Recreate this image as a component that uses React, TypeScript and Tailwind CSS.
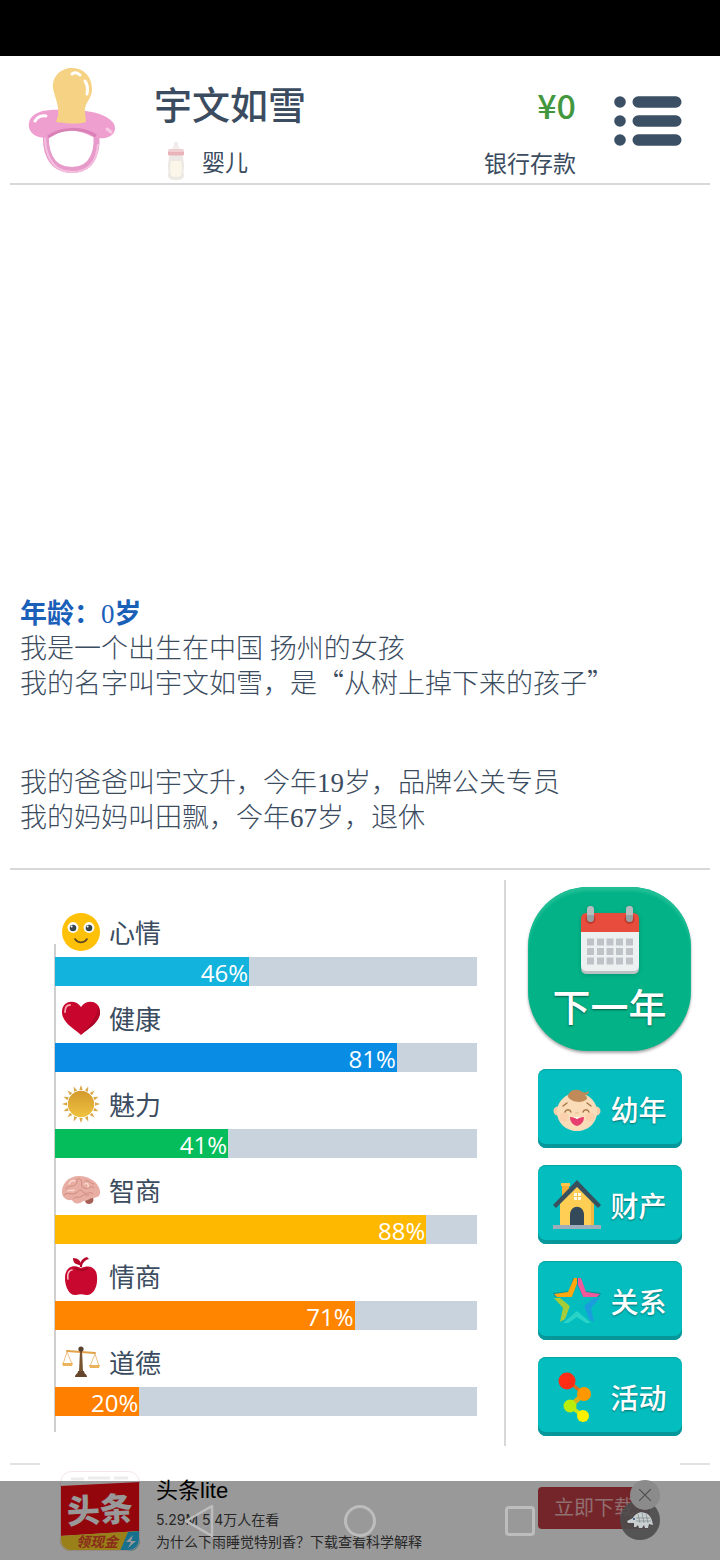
import React from "react";

// --- DATA ---
const STATS = [
  { name: "心情", value: 46, color: "bg-[#12b3dc]", icon: <SmileIcon /> },
  { name: "健康", value: 81, color: "bg-[#088ce4]", icon: <HeartIcon /> },
  { name: "魅力", value: 41, color: "bg-[#05bd5a]", icon: <SunIcon /> },
  { name: "智商", value: 88, color: "bg-[#ffb800]", icon: <BrainIcon /> },
  { name: "情商", value: 71, color: "bg-[#ff8500]", icon: <AppleIcon /> },
  { name: "道德", value: 20, color: "bg-[#ff7f00]", icon: <ScalesIcon /> },
];

const ACTIONS = [
  { name: "幼年", icon: <BabyIcon /> },
  { name: "财产", icon: <HouseIcon /> },
  { name: "关系", icon: <StarIcon /> },
  { name: "活动", icon: <NodesIcon /> },
];

// --- Header drawings ---
function PacifierIcon() {
  return (
    <svg viewBox="0 0 88 106" className="h-[106px] w-[88px] shrink-0" aria-hidden="true">
      <path d="M19 58C15 82 22 102 44 102C65 102 72 82 67 58" fill="none" stroke="#e79bcb" strokeWidth="6" />
      <path d="M17 64C16 86 24 104 44 104C62 104 69 92 70 76" fill="none" stroke="#f5bfdf" strokeWidth="2" />
      <path d="M1 55C3 44 18 41 32 42L58 43C74 45 88 52 87 61C86 70 74 72 65 69C50 61 37 60 25 68C12 73 -1 66 1 55Z" fill="#ee9fd0" />
      <path d="M20 69C32 60 53 58 68 68" fill="none" stroke="#d981b6" strokeWidth="3" />
      <path d="M7 53C9 49 14 47 18 48" fill="none" stroke="#fff" strokeWidth="3" strokeLinecap="round" />
      <path d="M79 61L83 64" stroke="#f8c9e5" strokeWidth="3" strokeLinecap="round" />
      <path d="M25 20C24 8 33 0 44 0C56 0 64 9 64 21C64 32 56 34 57 44L58 54C48 57 38 55 28 54C34 41 27 32 25 20Z" fill="#f6d384" />
      <path d="M44 6C47 4 50 5 52 7M57 13C60 17 60 21 59 26" fill="none" stroke="#fff" strokeWidth="3" strokeLinecap="round" />
    </svg>
  );
}

function BottleIcon() {
  return (
    <svg viewBox="0 0 20 40" className="h-10 w-5 shrink-0" aria-hidden="true">
      <path d="M6 9C6 6 8 6 8 4V1H12V4C12 6 14 6 14 9Z" fill="#f3ecea" />
      <rect x="2" y="8" width="16" height="7" rx="2" fill="#f0cdd1" />
      <path d="M2 11H18V14H2Z" fill="#e9b3ba" />
      <path d="M3 15H17C17 18 18 21 18 25C18 29 17 30 18 34C18 38 15 39 10 39S2 38 2 34C3 30 2 29 2 25C2 21 3 18 3 15Z" fill="#ece9e4" />
      <path d="M5 20H15L16 27L15 35Q10 37 5 35L4 27Z" fill="#fbf6e8" />
    </svg>
  );
}

function MenuIcon() {
  return (
    <svg viewBox="0 0 68 50" className="h-[50px] w-[68px]" fill="#3b5064" aria-hidden="true">
      {[6, 25, 44].map((y) => (
        <g key={y}>
          <circle cx="6" cy={y} r="5.8" />
          <rect x="18.5" y={y - 5.8} width="49" height="11.6" rx="5.8" />
        </g>
      ))}
    </svg>
  );
}

// --- Stat drawings ---
function SmileIcon() {
  return (
    <svg viewBox="0 0 40 40" className="size-10" aria-hidden="true">
      <circle cx="20" cy="20" r="19" fill="#ffc107" />
      <circle cx="12" cy="15.5" r="5.4" fill="#fff" />
      <circle cx="28" cy="15.5" r="5.4" fill="#fff" />
      <circle cx="12" cy="16" r="3.3" fill="#37474f" />
      <circle cx="28" cy="16" r="3.3" fill="#37474f" />
      <circle cx="10.6" cy="14.6" r="1" fill="#fff" />
      <circle cx="26.6" cy="14.6" r="1" fill="#fff" />
      <path d="M14 27C17 31.5 23 31.5 26 27" fill="none" stroke="#5b4524" strokeWidth="1.6" strokeLinecap="round" />
    </svg>
  );
}

function HeartIcon() {
  return (
    <svg viewBox="0 0 40 40" className="size-10" aria-hidden="true">
      <path d="M20 37C14 31 1 25 1 14C1 2 15 1 20 9C25 1 39 2 39 14C39 25 26 31 20 37Z" fill="#c8062d" />
      <path d="M20 37C26 31 39 25 39 14C39 12 38 10 37 8C37 20 27 28 20 37Z" fill="#b00428" />
      <path d="M4 14C4 9 6 7 9 7" fill="none" stroke="#f4a3ae" strokeWidth="1.8" strokeLinecap="round" />
    </svg>
  );
}

function SunIcon() {
  return (
    <svg viewBox="0 0 40 40" className="size-10" aria-hidden="true">
      <defs>
        <linearGradient id="sun" x1="0" y1="0" x2="0" y2="1">
          <stop offset="0" stopColor="#d39a2d" />
          <stop offset="1" stopColor="#f0c23f" />
        </linearGradient>
      </defs>
      {Array.from({ length: 16 }, (_, i) => (
        <path key={i} d="M18.3 6L20 1L21.7 6Z" fill="#d9a848" transform={`rotate(${i * 22.5} 20 20)`} />
      ))}
      <circle cx="20" cy="20" r="13.2" fill="url(#sun)" />
    </svg>
  );
}

function BrainIcon() {
  return (
    <svg viewBox="0 0 40 40" className="size-10" aria-hidden="true">
      <path d="M22 28L31 26C34 30 32 34 28 34C24 34 25 31 22 28Z" fill="#a65f54" />
      <path d="M1 22C1 14 7 6 18 6C29 6 38 13 39 21C40 26 36 28 31 28C27 29 27 31 22 31C20 34 13 35 11 30C5 31 1 27 1 22Z" fill="#e9aea3" />
      <path d="M5 19C8 14 12 18 15 14S12 9 18 9M19 9C23 12 18 16 23 18S31 14 33 18M3 25C8 21 10 26 15 23S18 18 22 22 29 20 32 24M24 11C28 9 29 14 33 14M12 29C14 25 18 29 21 26S27 27 28 25" fill="none" stroke="#cf8b81" strokeWidth="1" strokeLinecap="round" />
      <path d="M8 14C10 10 12 10 14 11M24 14C26 12 28 15 27 17M7 21C10 19 11 22 13 20" fill="none" stroke="#f9d9d1" strokeWidth="1.4" strokeLinecap="round" />
    </svg>
  );
}

function AppleIcon() {
  return (
    <svg viewBox="0 0 40 40" className="size-10" aria-hidden="true">
      <path d="M20 12C10 7 4 13 4 22C4 32 9 40 15 39C18 38 22 38 25 39C32 40 37 31 36 21C36 12 29 8 20 12Z" fill="#c9082f" />
      <path d="M19 11C18 6 22 2 26 1L28 3C24 4 21 7 21 11Z" fill="#b8062a" />
      <path d="M12 2C17 2 20 5 20 9C15 9 12 7 12 2Z" fill="#b8062a" />
      <path d="M7 23C6 18 8 14 11 14" fill="none" stroke="#f6b8c0" strokeWidth="1.6" strokeLinecap="round" />
      <path d="M14 12C17 15 24 15 27 12" fill="none" stroke="#9c0523" strokeWidth="1.5" />
    </svg>
  );
}

function ScalesIcon() {
  return (
    <svg viewBox="0 0 40 40" className="size-10" aria-hidden="true">
      <path d="M6 10L2 22M6 10L11 22M34 12L29 24M34 12L38 24" stroke="#edc184" strokeWidth="1" />
      <path d="M6 9L34 11" stroke="#e2a248" strokeWidth="2" strokeLinecap="round" />
      <path d="M1 21H12L11 24H2ZM28 23H39L38 26H29Z" fill="#eab35c" />
      <path d="M19 8H21L22 30H18Z" fill="#79552f" />
      <circle cx="20" cy="7" r="2.6" fill="#59402b" />
      <path d="M17 29H23C23 32 26 32 26 35H14C14 32 17 32 17 29Z" fill="#65452b" />
    </svg>
  );
}

// --- Button drawings ---
function CalendarIcon() {
  return (
    <svg viewBox="0 0 60 70" className="h-[70px] w-[60px] drop-shadow-sm" aria-hidden="true">
      <path d="M1 24H59V63Q59 69 53 69H7Q1 69 1 63Z" fill="#bcc2c4" />
      <path d="M1 24H59V60Q59 66 53 66H7Q1 66 1 60Z" fill="#ecf0f1" />
      <path d="M1 27V14Q1 8 7 8H53Q59 8 59 14V27Z" fill="#e74c3c" />
      {[10.5, 49.5].map((x) => (
        <g key={x}>
          <circle cx={x} cy="14" r="5" fill="#c0392b" />
          <rect x={x - 3.5} y="1" width="7" height="16" rx="3.5" fill="#98a2a5" />
          <path d={`M${x - 3.5} 10V4.5a3.5 3.5 0 0 1 7 0V10Z`} fill="#b6bdbf" />
        </g>
      ))}
      {[33.5, 43, 52.5].map((y) =>
        [7, 17, 26.5, 36, 46].map((x) => <rect key={`${x}-${y}`} x={x} y={y} width="7" height="7" fill="#bdc3c7" />)
      )}
    </svg>
  );
}

function BabyIcon() {
  return (
    <svg viewBox="0 0 48 48" className="size-12" aria-hidden="true">
      <circle cx="5" cy="26" r="4.5" fill="#f6cfa9" />
      <circle cx="43" cy="26" r="4.5" fill="#f6cfa9" />
      <path d="M24 8C35 8 44 16 44 27C44 38 35 46 24 46S4 38 4 27C4 16 13 8 24 8Z" fill="#fbdcb8" />
      <path d="M15 12C15 6 22 3 28 6C31 8 33 8 36 6C36 9 34 10 32 10C34 11 34 13 34 14C29 19 18 17 15 12Z" fill="#c08b58" />
      <circle cx="11" cy="32" r="4.5" fill="#fad0ad" />
      <circle cx="37" cy="32" r="4.5" fill="#fad0ad" />
      <path d="M12 27C13 24 17 24 18 27M30 27C31 24 35 24 36 27M10 21L14 18M34 18L38 21" fill="none" stroke="#a67648" strokeWidth="1.4" strokeLinecap="round" />
      <path d="M22 28H26" stroke="#efc198" strokeWidth="1.4" />
      <path d="M17 32C20 32 22 33 24 34C26 33 28 32 31 32C31 37 28 40 24 41C20 40 17 37 17 32Z" fill="#e83d6f" />
      <path d="M21 32H27L24 34Z" fill="#fff" />
    </svg>
  );
}

function HouseIcon() {
  return (
    <svg viewBox="0 0 48 48" className="size-12 overflow-visible" aria-hidden="true">
      <path d="M9 3H16V18H9Z" fill="#f4ae35" />
      <path d="M8 2H17V5H8Z" fill="#ffc64a" />
      <path d="M7 21L24 4L41 21V45H7Z" fill="#ffce54" />
      <path d="M38 18L41 21V45H38Z" fill="#f0b840" />
      <path d="M0 24L24 -1L48 24L45 27L24 6L3 27Z" fill="#39515f" />
      <path d="M17 45V34C17 23 31 23 31 34V45Z" fill="#34495a" />
      <rect x="21" y="12" width="7" height="7" rx="1" fill="#fffbe9" />
      <path d="M24.5 12V19M21 15.5H28" stroke="#f3c654" strokeWidth="1" />
      <rect x="0" y="44" width="48" height="4" fill="#9dadba" />
    </svg>
  );
}

function StarIcon() {
  return (
    <svg viewBox="0 0 48 48" className="size-12" aria-hidden="true">
      <g fill="#0a8f92">
        <path d="M0 16L16 14L20 1H28L32 14L48 16L46 20H2Z" />
      </g>
      <path d="M1 17L15 15L21 1H24V7L19 20H4Z" fill="#ffa70f" />
      <path d="M25 1H28L33 15L47 17L44 20H30L25 8Z" fill="#f05a9c" />
      <path d="M1 21H7L17 29L12 42L7 45L10 31Z" fill="#a5cc39" />
      <path d="M47 21H41L31 29L36 42L41 45L38 31Z" fill="#1b9ddd" />
      <path d="M10 46L24 34L38 46H33L24 40L15 46Z" fill="#29d3c8" />
      <path d="M19 20L24 7L30 20H39L31 29L34 38L24 34L14 38L17 29L8 20Z" fill="#04bdbe" />
    </svg>
  );
}

function NodesIcon() {
  return (
    <svg viewBox="0 0 48 52" className="h-[52px] w-12" aria-hidden="true">
      <path d="M15 10L31 23" stroke="#dd6b1b" strokeWidth="3" />
      <path d="M31 23L17 35" stroke="#d6b31b" strokeWidth="5" />
      <path d="M17 35L30 45" stroke="#c4e41b" strokeWidth="4" />
      <circle cx="14" cy="10" r="8.5" fill="#ff2d16" />
      <circle cx="31" cy="23" r="7" fill="#ff9800" />
      <circle cx="17" cy="35" r="6.5" fill="#b9ee0c" />
      <circle cx="30" cy="45" r="6" fill="#fff000" />
    </svg>
  );
}

function HedgehogIcon() {
  return (
    <svg viewBox="0 0 28 18" className="h-[18px] w-7" aria-hidden="true">
      <path d="M1 10L7 7C9 3 14 0 19 2C24 3 26 8 27 14L23 13L22 17H19L18 14L16 17H13L12 14L10 16H8V12L2 12Z" fill="#c9cfd0" />
      <path d="M12 3L14 12M16 2L18 12M20 3L22 12M10 7H24M10 10H25" stroke="#7d8485" strokeWidth="0.7" />
      <circle cx="8" cy="8" r="1" fill="#234d78" />
    </svg>
  );
}

// --- Sections ---
const Header = () => (
  <header className="mx-[10px] flex h-[129px] items-start border-b-2 border-[#d8d8d8] pt-3 pr-7 pl-[18px]">
    <PacifierIcon />
    <div className="ml-[38px] flex-1 pt-[10px]">
      <h1 className="text-[38px] leading-[50px] font-medium">宇文如雪</h1>
      <div className="mt-[13px] flex h-10 items-center gap-4 pl-3 text-[23px]">
        <BottleIcon />
        <span>婴儿</span>
      </div>
    </div>
    <div className="pt-[10px] text-right">
      <p className="text-[34px] leading-[54px] font-medium text-[#43973f]">¥0</p>
      <p className="mt-[10px] text-[23px] leading-10">银行存款</p>
    </div>
    <button aria-label="菜单" className="mt-7 ml-[38px]">
      <MenuIcon />
    </button>
  </header>
);

const LifeLog = () => (
  <section className="mx-[10px] flex flex-1 flex-col justify-end border-b-2 border-[#d8d8d8] px-[10px] pb-8 font-['Liberation_Serif','Noto_Sans_CJK_SC',serif] text-[27px] leading-[35px] font-light">
    <h2 className="font-bold text-[#1a60b8]">
      年龄：<span className="font-normal">0</span>岁
    </h2>
    <p>我是一个出生在中国 扬州的女孩</p>
    {/* Full-width quotes come from the CJK font */}
    <p>
      我的名字叫宇文如雪，是
      <span className="font-['Noto_Sans_CJK_SC',sans-serif] leading-none">“</span>
      从树上掉下来的孩子
      <span className="font-['Noto_Sans_CJK_SC',sans-serif] leading-none">”</span>
    </p>
    <p className="mt-16">我的爸爸叫宇文升，今年19岁，品牌公关专员</p>
    <p>我的妈妈叫田飘，今年67岁，退休</p>
  </section>
);

const StatRow: React.FC<{ stat: typeof STATS[0] }> = ({ stat }) => (
  <div className="relative">
    <div className="flex h-[45px] items-start gap-2 pl-[6px]">
      {stat.icon}
      <span className="text-[26px] leading-10">{stat.name}</span>
    </div>
    <div role="meter" aria-label={stat.name} aria-valuenow={stat.value} aria-valuemin={0} aria-valuemax={100} className="h-[29px] bg-[#c9d3de]">
      <div
        className={`${stat.color} h-full pr-px text-right font-['Open_Sans',sans-serif] text-2xl leading-8 text-white`}
        style={{ width: `${stat.value}%` }}
      >
        {stat.value}%
      </div>
    </div>
  </div>
);

const Panel = () => (
  <main className="mx-[10px] flex">
    <section className="flex-1 pt-[42px] pr-[27px] pl-[45px]">
      <div className="relative flex flex-col gap-3">
        {/* Chart axis */}
        <div className="absolute top-8 -bottom-4 -left-px w-0.5 bg-[#cfcfcf]" />
        {STATS.map((stat) => (
          <StatRow key={stat.name} stat={stat} />
        ))}
      </div>
    </section>
    <div className="mt-[10px] mb-[17px] w-0.5 bg-[#d8d8d8]" />
    <nav className="flex w-[204px] flex-col items-center gap-[17px] pt-[17px] pb-[27px] pl-[3px]">
      <button className="mb-px flex h-[164px] w-[163px] flex-col items-center rounded-[60px] bg-[#03b287] pt-[18px] text-[38px] leading-[60px] font-medium text-white shadow-[0_2px_3px_rgba(0,0,0,0.35),inset_0_4px_3px_#22bf96] [text-shadow:0_1px_2px_rgba(0,0,0,0.5)]">
        <CalendarIcon />
        下一年
      </button>
      {ACTIONS.map((action) => (
        <button
          key={action.name}
          className="flex h-[79px] w-36 items-center gap-[10px] rounded-lg bg-[#04bdbe] pl-[15px] text-[28px] font-medium text-white shadow-[inset_0_-4px_0_#07979a,inset_0_1px_1px_#07a3a5] [text-shadow:0_1px_2px_rgba(0,0,0,0.4)]"
        >
          {action.icon}
          {action.name}
        </button>
      ))}
    </nav>
  </main>
);

const AdBanner = () => (
  <footer className="relative h-[97px]">
    <div className="flex justify-between px-[10px]">
      <div className="h-0.5 w-[30px] bg-[#e2e2e2]" />
      <div className="h-0.5 w-[30px] bg-[#e2e2e2]" />
    </div>
    <div className="flex items-start pt-[6px] pr-[70px] pl-[60px] font-['Liberation_Sans','Noto_Sans_CJK_SC',sans-serif]">
      <svg viewBox="0 0 80 80" className="size-20 shrink-0" role="img" aria-label="头条">
        <defs>
          <clipPath id="app">
            <rect width="80" height="80" rx="11" />
          </clipPath>
        </defs>
        <g clipPath="url(#app)">
          <rect width="80" height="80" fill="#fff" />
          <path d="M0 15L80 11V60L0 65Z" fill="#f50a14" />
          <path d="M0 65L80 60V80H0Z" fill="#ffd629" />
          <path d="M68 61L80 60V80H60Z" fill="#27bdea" />
          <path d="M73 64L66 71H71L68 77L76 70H71Z" fill="#fff" />
        </g>
        <rect x="0.5" y="0.5" width="79" height="79" rx="11" fill="none" stroke="#f7e6e8" />
        <path d="M11 8H24M28 7H50M54 7H68" stroke="#ececec" strokeWidth="3" />
        <text x="7" y="51" fontSize="33" fontWeight="900" fill="#fff" fontFamily="Noto Sans CJK SC, sans-serif" transform="rotate(-3 40 40)">头条</text>
        <text x="16" y="76" fontSize="14" fontWeight="700" fontStyle="italic" fill="#e5482d" fontFamily="Noto Sans CJK SC, sans-serif">领现金</text>
      </svg>
      <div className="ml-4 flex-1 text-[#444]">
        <h3 className="pt-1 text-[22px] leading-[32px] text-black">头条lite</h3>
        <p className="pt-0.5 font-['Inter','Noto_Sans_CJK_SC',sans-serif] text-sm leading-[22px]">5.29M 5.4万人在看</p>
        <p className="text-sm leading-[22px]">为什么下雨睡觉特别香？下载查看科学解释</p>
      </div>
      <button className="mt-4 h-[42px] w-28 shrink-0 rounded-sm bg-[#c23f45] pl-4 text-left text-xl text-[#f0b9bc]">立即下载</button>
    </div>

    {/* System navigation bar, laid over the ad */}
    <div className="absolute inset-x-0 bottom-0 flex h-[79px] items-center justify-center gap-32 bg-black/40">
      <button aria-label="返回" className="size-8">
        <svg viewBox="0 0 32 32" className="size-8 overflow-visible" fill="none" stroke="#bdbdbd" strokeWidth="2.5" strokeLinejoin="round">
          <path d="M28 1V31L2 16Z" />
        </svg>
      </button>
      <button aria-label="主页" className="size-8 rounded-full border-3 border-[#bdbdbd]" />
      <button aria-label="最近任务" className="size-8">
        <span className="m-px block size-[30px] rounded-sm border-3 border-[#bdbdbd]" />
      </button>
    </div>

    {/* Floating assistant badge and its close button */}
    <div className="absolute right-[60px] bottom-5 flex size-10 items-center justify-center rounded-full bg-[#4d4d4d]/90">
      <HedgehogIcon />
    </div>
    <button aria-label="关闭" className="absolute right-[60px] bottom-[50px] flex size-[30px] items-center justify-center rounded-full bg-[#8b8b8b]">
      <svg viewBox="0 0 12 12" className="size-3" stroke="#505050" strokeWidth="1.2">
        <path d="M0 0L12 12M12 0L0 12" />
      </svg>
    </button>
  </footer>
);

const App = () => {
  return (
    <div className="flex min-h-screen flex-col bg-white font-['Noto_Sans_CJK_SC',sans-serif] text-[#3b4c60]">
      <div className="h-14 bg-black" />
      <Header />
      <LifeLog />
      <Panel />
      <AdBanner />
    </div>
  );
};

export default App;
